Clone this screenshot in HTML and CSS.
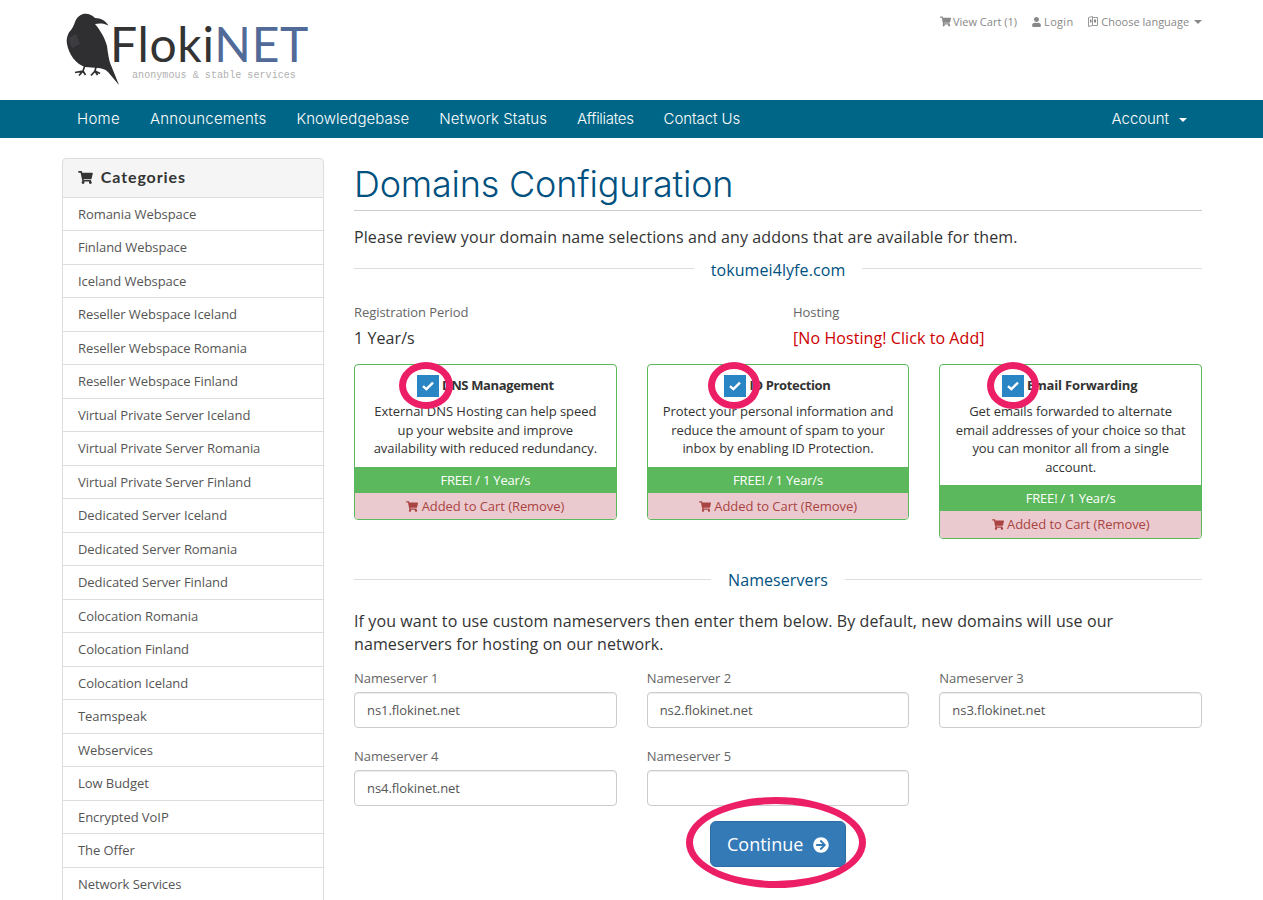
FILE: index.html
```html
<!DOCTYPE html>
<html lang="en">
<head>
<meta charset="utf-8">
<title>Domains Configuration</title>
<link rel="stylesheet" href="styles.css">
</head>
<body>
<svg class="defs" width="0" height="0" aria-hidden="true">
  <symbol id="cart" viewBox="0 0 576 512"><path d="M528.12 301.319l47.273-208C578.806 78.301 567.391 64 551.99 64H159.208l-9.166-44.81C147.758 8.021 137.93 0 126.529 0H24C10.745 0 0 10.745 0 24v16c0 13.255 10.745 24 24 24h69.883l70.248 343.435C147.325 417.1 136 435.222 136 456c0 30.928 25.072 56 56 56s56-25.072 56-56c0-15.674-6.447-29.835-16.824-40h209.647C430.447 426.165 424 440.326 424 456c0 30.928 25.072 56 56 56s56-25.072 56-56c0-22.172-12.888-41.332-31.579-50.405l5.517-24.276c3.413-15.018-8.002-29.319-23.403-29.319H218.117l-6.545-32h293.145c11.206 0 20.92-7.754 23.403-18.681z"/></symbol>
  <symbol id="user" viewBox="0 0 448 512"><path d="M224 256c70.7 0 128-57.3 128-128S294.7 0 224 0 96 57.3 96 128s57.3 128 128 128zm89.6 32h-16.7c-22.2 10.2-46.9 16-72.9 16s-50.6-5.8-72.9-16h-16.7C60.2 288 0 348.2 0 422.4V464c0 26.5 21.5 48 48 48h352c26.5 0 48-21.5 48-48v-41.6c0-74.2-60.2-134.4-134.4-134.4z"/></symbol>
  <symbol id="arrow" viewBox="0 0 512 512"><path d="M256 8c137 0 248 111 248 248S393 504 256 504 8 393 8 256 119 8 256 8zm-28.9 143.6l75.5 72.4H120c-13.3 0-24 10.7-24 24v16c0 13.3 10.7 24 24 24h182.6l-75.5 72.4c-9.7 9.3-9.9 24.8-.4 34.3l11 10.9c9.4 9.4 24.6 9.4 33.9 0L404.3 273c9.4-9.4 9.4-24.6 0-33.9L271.6 106.3c-9.4-9.4-24.6-9.4-33.9 0l-11 10.9c-9.3 9.6-9.1 25.1.4 34.4z"/></symbol>
  <symbol id="check" viewBox="0 0 12 10"><path d="M1 5.2 4.4 8.2 11 1.6" fill="none" stroke="#fff" stroke-width="2.4"/></symbol>
</svg>

<header class="top">
  <a class="logo" href="#">
    <svg class="raven" viewBox="62 10 60 78" width="60" height="78" aria-hidden="true">
      <path fill="#2f2f31" d="M83 14C88 13 92 15 95 18C101 18 106 21 108.5 25.5C104 23 99 23 95 24C100 30 105 38 107 46C108 54 109 60 110.5 64L119 85L108 72C105 69 101 68 98 68L85 67C76 64 69 55 67 44C66 38 68 33 71 30C73 27 74 25 75 22C77 17 80 15 83 14Z"/>
      <path fill="none" stroke="#2f2f31" stroke-width="1.7" d="M85 65L83 71L75 72.5M83 71L79 75.5M83 71L85.500 75M96 67L95 71L91 75.500M95 71L97.500 75M95 71L100 73.500"/>
      <path fill="#3d3d41" d="M68 38L76 34L80 44L72 48Z"/>
    </svg>
    <span class="logo-words">
      <span class="logo-name">Floki<span class="logo-net">NET</span></span>
      <span class="logo-tag">anonymous &amp; stable services</span>
    </span>
  </a>
  <nav class="toplinks">
    <a class="tl-cart" href="#"><svg class="ico" width="11" height="11"><use href="#cart"/></svg> View Cart (1)</a>
    <a class="tl-login" href="#"><svg class="ico" width="9" height="10"><use href="#user"/></svg> Login</a>
    <a href="#"><svg class="ico" width="10" height="11" viewBox="0 0 10 11"><path d="M.5 1.500 4.500.5v9l-4 1zM4.500 1.500h5v8h-5z" fill="none" stroke="#999"/><path d="M2 3.500h1.500v3H2zM6 3.500h2v3H6z" fill="#888"/></svg> Choose language <span class="caret"></span></a>
  </nav>
</header>

<div class="navbar">
  <div class="navbar-in">
    <a class="n-home" href="#">Home</a>
    <a class="n-ann" href="#">Announcements</a>
    <a class="n-kb" href="#">Knowledgebase</a>
    <a class="n-net" href="#">Network Status</a>
    <a class="n-aff" href="#">Affiliates</a>
    <a class="n-con" href="#">Contact Us</a>
    <a class="account" href="#">Account<span class="caret caret-w"></span></a>
  </div>
</div>

<div class="wrap">
  <aside class="side">
    <div class="side-head"><svg class="side-ico" width="15" height="13"><use href="#cart"/></svg> Categories</div>
    <a href="#">Romania Webspace</a>
    <a href="#">Finland Webspace</a>
    <a href="#">Iceland Webspace</a>
    <a href="#">Reseller Webspace Iceland</a>
    <a href="#">Reseller Webspace Romania</a>
    <a href="#">Reseller Webspace Finland</a>
    <a href="#">Virtual Private Server Iceland</a>
    <a href="#">Virtual Private Server Romania</a>
    <a href="#">Virtual Private Server Finland</a>
    <a href="#">Dedicated Server Iceland</a>
    <a href="#">Dedicated Server Romania</a>
    <a href="#">Dedicated Server Finland</a>
    <a href="#">Colocation Romania</a>
    <a href="#">Colocation Finland</a>
    <a href="#">Colocation Iceland</a>
    <a href="#">Teamspeak</a>
    <a href="#">Webservices</a>
    <a href="#">Low Budget</a>
    <a href="#">Encrypted VoIP</a>
    <a href="#">The Offer</a>
    <a href="#">Network Services</a>
  </aside>

  <main class="main">
    <h1>Domains Configuration</h1>
    <p class="lead">Please review your domain name selections and any addons that are available for them.</p>

    <div class="divider first"><span>tokumei4lyfe.com</span></div>

    <div class="two">
      <div>
        <div class="lbl">Registration Period</div>
        <div class="val">1 Year/s</div>
      </div>
      <div>
        <div class="lbl">Hosting</div>
        <div class="val"><a class="red" href="#">[No Hosting! Click to Add]</a></div>
      </div>
    </div>

    <div class="addons">
      <section class="card">
        <div class="card-body">
          <label class="card-title"><span class="tick tick-1"><svg width="12" height="10"><use href="#check"/></svg><i class="ring"></i></span><span class="title-text">DNS Management</span></label>
          <p>External DNS Hosting can help speed up your website and improve availability with reduced redundancy.</p>
        </div>
        <div class="price">FREE! / 1 Year/s</div>
        <div class="added"><svg width="12" height="11"><use href="#cart"/></svg> Added to Cart (Remove)</div>
      </section>
      <section class="card">
        <div class="card-body">
          <label class="card-title"><span class="tick tick-2"><svg width="12" height="10"><use href="#check"/></svg><i class="ring"></i></span><span class="title-text">ID Protection</span></label>
          <p>Protect your personal information and reduce the amount of spam to your inbox by enabling ID Protection.</p>
        </div>
        <div class="price">FREE! / 1 Year/s</div>
        <div class="added"><svg width="12" height="11"><use href="#cart"/></svg> Added to Cart (Remove)</div>
      </section>
      <section class="card">
        <div class="card-body">
          <label class="card-title"><span class="tick tick-3"><svg width="12" height="10"><use href="#check"/></svg><i class="ring"></i></span><span class="title-text wide">Email Forwarding</span></label>
          <p>Get emails forwarded to alternate email addresses of your choice so that you can monitor all from a single account.</p>
        </div>
        <div class="price">FREE! / 1 Year/s</div>
        <div class="added"><svg width="12" height="11"><use href="#cart"/></svg> Added to Cart (Remove)</div>
      </section>
    </div>

    <div class="divider second"><span>Nameservers</span></div>
    <p class="ns-intro">If you want to use custom nameservers then enter them below. By default, new domains will use our nameservers for hosting on our network.</p>

    <div class="ns-grid">
      <div class="field"><label>Nameserver 1</label><input type="text" value="ns1.flokinet.net"></div>
      <div class="field"><label>Nameserver 2</label><input type="text" value="ns2.flokinet.net"></div>
      <div class="field"><label>Nameserver 3</label><input type="text" value="ns3.flokinet.net"></div>
      <div class="field"><label>Nameserver 4</label><input type="text" value="ns4.flokinet.net"></div>
      <div class="field"><label>Nameserver 5</label><input type="text" value=""></div>
    </div>

    <div class="actions">
      <a class="btn" href="#">Continue <svg width="16" height="16"><use href="#arrow"/></svg><i class="ring-btn"></i></a>
    </div>
  </main>
</div>
</body>
</html>
```
FILE: styles.css
```css
* { box-sizing: border-box; }
html, body { margin: 0; height: 900px; overflow: hidden; }
body { background: #fff; color: #333; font: 13px/1.42857 "Open Sans", sans-serif; letter-spacing: -.06px; }
a { text-decoration: none; color: inherit; }
.defs { position: absolute; }

.top { width: 1140px; height: 100px; margin: 0 0 0 62px; display: flex; justify-content: space-between; letter-spacing: 0; }
.logo { display: flex; align-items: flex-start; margin: 10px 0 0 0; }
.raven { display: block; flex: none; }
.logo-words { display: flex; flex-direction: column; margin-left: -12px; }
.logo-name { font: 400 48px/1 "Lato", sans-serif; color: #333; margin-top: 10px; letter-spacing: .7px; }
.logo-net { color: #526a97; }
.logo-tag { font: 10px/1 "Liberation Mono", monospace; color: #b0b0b0; margin: 3px 0 0 22px; letter-spacing: .07px; }

.toplinks { display: flex; gap: 15px; font-size: 11px; color: #888; padding-top: 14px; height: 30px; }
.toplinks a { display: block; white-space: nowrap; }
.tl-cart .ico { margin-right: -1px; }
.tl-login { letter-spacing: .3px; }
.ico { fill: #888; vertical-align: -1px; }
.caret { display: inline-block; width: 0; height: 0; border: 4px solid transparent; border-top-color: #888; border-bottom: 0; vertical-align: 2px; margin-left: 2px; }
.caret-w { border-top-color: #fff; margin-left: 10px; }

.navbar { height: 38px; background: #006687; }
.navbar-in { width: 1140px; height: 38px; margin: 0 0 0 62px; display: flex; color: #fff; font: 300 15px/38px "Inter", sans-serif; }
.navbar-in a { padding: 0 15px; }
.n-home { letter-spacing: .3px; }
.n-ann { letter-spacing: .18px; }
.n-kb { letter-spacing: .06px; }
.n-net { letter-spacing: .07px; }
.n-aff { letter-spacing: -.3px; }
.n-con { letter-spacing: -.07px; }
.account { margin-left: auto; }

.wrap { width: 1140px; margin: 20px 0 0 62px; display: flex; gap: 30px; align-items: flex-start; }

.side { width: 262px; flex: none; border-radius: 4px; box-shadow: 0 1px 1px rgba(0,0,0,.05); }
.side-head { height: 39.900px; padding: 0 15px; background: #f5f5f5; border: 1px solid #ddd; border-radius: 4px 4px 0 0; font: 700 16px/36px "Lato", sans-serif; color: #333; letter-spacing: .9px; }
.side-ico { fill: #333; vertical-align: -1px; margin-right: 3px; }
.side a { display: block; height: 34.5px; padding: 7px 15px; margin-top: -1px; border: 1px solid #ddd; background: #fff; color: #555; }

.main { width: 848px; flex: none; }
h1 { margin: 0; height: 53px; border-bottom: 1px solid #ccc; font: 300 36px/53px "Inter", sans-serif; color: #00517f; letter-spacing: -.2px; }
.lead { margin: 15px 0 0; font-size: 16px; line-height: 23px; letter-spacing: .105px; }

.divider { display: flex; align-items: center; gap: 17px; font-size: 16px; line-height: 22px; color: #00517f; letter-spacing: .08px; }
.divider::before, .divider::after { content: ""; flex: 1; height: 1px; background: #ddd; }
.divider.first { margin-top: 10px; }
.divider.first::before, .divider.first::after { margin-bottom: 4px; }
.divider.second { margin-top: 30.200px; }
.divider.second::before, .divider.second::after { margin-bottom: 1px; }

.two { display: grid; grid-template-columns: 1fr 1fr; gap: 30px; margin-top: 22px; }
.lbl { color: #666; line-height: 19px; }
.val { font-size: 16px; line-height: 23px; margin-top: 5px; letter-spacing: .08px; }
.red { color: #c00; }

.addons { display: grid; grid-template-columns: repeat(3, 1fr); gap: 30px; margin-top: 14px; align-items: start; }
.card { border: 1px solid #5cb85c; border-radius: 4px; }
.card-body { padding: 10px 15px 9.100px; text-align: center; }
.card-title { display: flex; justify-content: center; align-items: center; font-weight: 700; height: 22px; letter-spacing: -.36px; }
.title-text { padding-bottom: 2px; }
.title-text.wide { letter-spacing: -.17px; }
.card p { margin: 5px 0 0; line-height: 18.57px; }
.tick { position: relative; flex: none; width: 22px; height: 22px; margin-right: 4px; background: #2a85c4; display: flex; align-items: center; justify-content: center; }
.ring { position: absolute; top: -13px; height: 47px; border: 7px solid #ec1e65; border-radius: 50%; }
.tick-1 { margin-right: 3px; }
.tick-2 { margin-left: -2px; }
.tick-3 { margin: 0 3px 0 -2px; }
.tick-1 .ring { left: -18px; width: 54px; }
.tick-2 .ring { left: -16px; width: 52px; }
.tick-3 .ring { left: -15px; width: 52px; }
.price { height: 26px; line-height: 26px; background: #5cb85c; color: #fff; text-align: center; letter-spacing: -.2px; }
.added { height: 26.300px; line-height: 26.600px; background: #ebcacf; color: #a94442; text-align: center; border-radius: 0 0 3px 3px; }
.added svg { fill: #a94442; vertical-align: -1px; }

.ns-intro { margin: 19px 0 0; font-size: 16px; line-height: 23px; letter-spacing: .105px; }
.ns-grid { display: grid; grid-template-columns: repeat(3, 1fr); gap: 19px 30px; margin-top: 13px; }
.field label { display: block; color: #666; line-height: 19px; margin-bottom: 4px; }
.field input { display: block; width: 100%; height: 36px; padding: 0 12px; border: 1px solid #ccc; border-radius: 4px; font: 13px "Open Sans", sans-serif; letter-spacing: -.06px; color: #555; box-shadow: inset 0 1px 1px rgba(0,0,0,.075); }

.actions { display: flex; justify-content: center; margin-top: 15px; }
.btn { position: relative; display: block; height: 46px; padding: 0 15.500px; background: #337ab7; border: 1px solid #2e6da4; border-radius: 6px; color: #fff; font-size: 18px; line-height: 44px; letter-spacing: 0; }
.btn svg { fill: #fff; vertical-align: -2px; margin-left: 5px; }
.ring-btn { position: absolute; left: -25px; top: -25px; width: 180px; height: 91px; border: 7px solid #ec1e65; border-radius: 50%; }
```
